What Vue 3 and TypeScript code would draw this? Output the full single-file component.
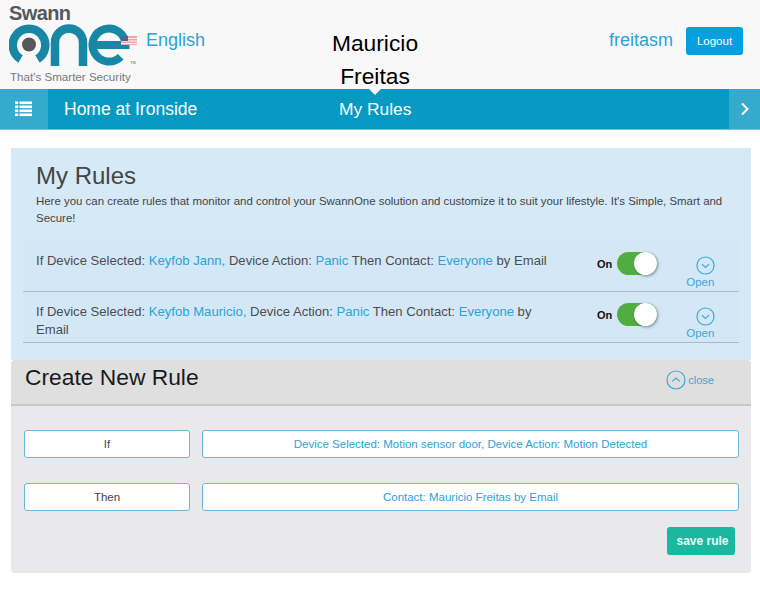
<script setup lang="ts">
interface Rule {
  device: string;
  contact: string;
}

const rules: Rule[] = [
  { device: 'Keyfob Jann,', contact: 'Everyone' },
  { device: 'Keyfob Mauricio,', contact: 'Everyone' }
];
</script>

<template>
  <div class="page">
    <header class="top-bar">
      <div class="brand">
        <div class="logo">
          <span class="logo-name">Swann</span>
          <svg class="logo-mark" width="136" height="46" viewBox="0 0 136 46">
            <g fill="none" stroke="#1787a5" stroke-width="8.5">
              <path d="M11.5 36 A16.3 16.3 0 1 1 28.5 36" />
              <path d="M46 43 V19.5 A14 14 0 0 1 74 19.5 V43" />
            </g>
            <path d="M111.7 33.7 A16.5 16.5 0 1 1 116.5 22 H84" fill="none" stroke="#1787a5" stroke-width="8" />
            <circle cx="20" cy="21.5" r="7" fill="#55585b" />
            <rect x="112" y="13" width="16" height="9" fill="#e7a9a6" />
            <path d="M112 15.5 H128 M112 18 H128 M112 20.5 H128" stroke="#f4f0f0" stroke-width="1" />
            <rect x="112" y="13" width="7" height="5" fill="#53648f" />
            <text x="121" y="41" font-size="4" fill="#666">TM</text>
          </svg>
          <span class="logo-tag">That's Smarter Security</span>
        </div>
        <span class="lang">English</span>
      </div>
      <h1 class="user-name">Mauricio Freitas</h1>
      <div class="account">
        <span class="username">freitasm</span>
        <button class="logout">Logout</button>
      </div>
    </header>

    <nav class="nav-bar">
      <div class="nav-btn menu">
        <svg width="17" height="16" viewBox="0 0 17 16" fill="#fff">
          <rect x="0" y="0.5" width="3.2" height="2.6" />
          <rect x="4.5" y="0.5" width="12.5" height="2.6" />
          <rect x="0" y="4.5" width="3.2" height="2.6" />
          <rect x="4.5" y="4.5" width="12.5" height="2.6" />
          <rect x="0" y="8.5" width="3.2" height="2.6" />
          <rect x="4.5" y="8.5" width="12.5" height="2.6" />
          <rect x="0" y="12.5" width="3.2" height="2.6" />
          <rect x="4.5" y="12.5" width="12.5" height="2.6" />
        </svg>
      </div>
      <span class="home">Home at Ironside</span>
      <span class="nav-title">My Rules</span>
      <div class="nav-btn next">
        <svg width="10" height="14" viewBox="0 0 10 14" fill="none" stroke="#fff" stroke-width="2">
          <path d="M2 1.5 L7.5 7 L2 12.5" />
        </svg>
      </div>
    </nav>

    <main class="content">
      <section class="rules-panel">
        <div class="intro">
          <h2>My Rules</h2>
          <p>Here you can create rules that monitor and control your SwannOne solution and customize it to suit your lifestyle. It's Simple, Smart and Secure!</p>
        </div>
        <div v-for="rule in rules" :key="rule.device" class="rule-row">
          <p class="rule-text">
            If Device Selected: <em>{{ rule.device }}</em> Device Action: <em>Panic</em> Then Contact: <em>{{ rule.contact }}</em> by Email
          </p>
          <div class="rule-state">
            <b>On</b>
            <span class="toggle"><span class="knob"></span></span>
          </div>
          <div class="rule-open">
            <svg width="19" height="19" viewBox="0 0 20 20" fill="none" stroke="#3ba6d6" stroke-width="1.2">
              <circle cx="10" cy="10" r="9" />
              <path d="M6.2 8.6 L10 12 L13.8 8.6" />
            </svg>
            <span>Open</span>
          </div>
        </div>
      </section>

      <section class="create-panel">
        <div class="create-head">
          <h2>Create New Rule</h2>
          <div class="close-link">
            <svg width="20" height="20" viewBox="0 0 20 20" fill="none" stroke="#3ba6d6" stroke-width="1.2">
              <circle cx="10" cy="10" r="9" />
              <path d="M6.2 11.4 L10 8 L13.8 11.4" />
            </svg>
            <span>close</span>
          </div>
        </div>
        <div class="create-body">
          <div class="field-row">
            <div class="field label">If</div>
            <div class="field value">Device Selected: Motion sensor door, Device Action: Motion Detected</div>
          </div>
          <div class="field-row">
            <div class="field label">Then</div>
            <div class="field value">Contact: Mauricio Freitas by Email</div>
          </div>
          <div class="actions">
            <button class="save">save rule</button>
          </div>
        </div>
      </section>
    </main>
  </div>
</template>

<style>
html,
body {
  background: #fff;
}
</style>

<style scoped>
.page {
  width: 760px;
  height: 590px;
  overflow: hidden;
  font-family: "Liberation Sans", Arial, sans-serif;
  color: #444;
}

.top-bar {
  height: 89px;
  background: #f8f8f9;
  display: grid;
  grid-template-columns: 310px 130px 1fr;
  box-sizing: border-box;
}

.brand {
  display: flex;
  align-items: flex-start;
  padding-left: 9px;
}

.logo {
  display: flex;
  flex-direction: column;
  width: 136px;
}

.logo-name {
  font-size: 20px;
  font-weight: 700;
  letter-spacing: -0.6px;
  color: #55585b;
  line-height: 20px;
  margin-top: 3px;
}

.logo-mark {
  display: block;
}

.logo-tag {
  font-size: 11.6px;
  line-height: 14px;
  color: #77797b;
  margin-top: 1px;
  margin-left: 1px;
  white-space: nowrap;
}

.lang {
  font-size: 18px;
  line-height: 22px;
  color: #2ba3d5;
  margin-top: 29px;
  margin-left: 1px;
}

.user-name {
  margin: 0;
  padding-top: 27px;
  font-size: 22.8px;
  font-weight: 400;
  line-height: 33px;
  color: #000;
  text-align: center;
}

.account {
  display: flex;
  justify-content: flex-end;
  align-items: flex-start;
  gap: 13px;
  padding: 27px 17px 0 0;
}

.username {
  font-size: 18px;
  line-height: 27px;
  color: #2ba3d5;
}

.logout {
  width: 57px;
  height: 28px;
  padding: 0;
  border: none;
  border-radius: 3px;
  background: #069fdf;
  color: #fff;
  font-family: inherit;
  font-size: 11.5px;
}

.nav-bar {
  position: relative;
  height: 41px;
  box-sizing: border-box;
  background: #069ac3;
  border-bottom: 1px solid #7fc4dc;
  display: flex;
  align-items: center;
  color: #fff;
}

.nav-bar::before {
  content: "";
  position: absolute;
  left: 369px;
  top: 0;
  border-left: 6px solid transparent;
  border-right: 6px solid transparent;
  border-top: 6px solid #f8f8f9;
}

.nav-btn {
  height: 40px;
  background: #36a9cf;
  display: flex;
  align-items: center;
  justify-content: center;
  flex: none;
}

.menu {
  width: 46px;
  padding-right: 2px;
  margin-right: 16px;
}

.next {
  width: 31px;
  margin-left: auto;
}

.home {
  font-size: 17.5px;
  width: 275px;
}

.nav-title {
  font-size: 17.4px;
}

.content {
  margin: 18px 9px 0 11px;
}

.rules-panel {
  background: #d6e9f6;
  padding: 16px 12px 17px;
}

.intro {
  padding: 0 13px 14px;
}

.intro h2 {
  margin: 0;
  font-size: 24px;
  font-weight: 400;
  line-height: 24px;
  color: #444;
}

.intro p {
  margin: 5px 0 0;
  font-size: 11.45px;
  line-height: 17px;
  color: #444;
}

.rule-row {
  height: 51px;
  box-sizing: border-box;
  background: #d3e7f7;
  border-bottom: 1px solid #a7bccb;
  display: flex;
  align-items: flex-start;
  padding: 11px 0 0 13px;
}

.rule-text {
  margin: 0;
  width: 520px;
  flex: none;
  font-size: 13.1px;
  line-height: 18px;
  color: #4d4d4d;
}

.rule-text em {
  font-style: normal;
  color: #2ba3d5;
}

.rule-state {
  margin-left: 41px;
  display: flex;
  align-items: center;
  gap: 5px;
  flex: none;
}

.rule-state b {
  font-size: 11px;
  color: #111;
}

.toggle {
  position: relative;
  display: block;
  width: 40px;
  height: 23px;
  border-radius: 12px;
  background: #50ae40;
}

.knob {
  position: absolute;
  right: 0;
  top: 0;
  width: 23px;
  height: 23px;
  border-radius: 50%;
  background: #fff;
  box-shadow: 1px 1px 3px rgba(0, 0, 0, 0.4);
}

.rule-open {
  margin-left: 26px;
  width: 34px;
  margin-top: 4px;
  display: flex;
  flex-direction: column;
  align-items: center;
  font-size: 11.5px;
  line-height: 14px;
  color: #3ba6d6;
}

.rule-open svg {
  margin-left: 11px;
}

.create-panel {
  height: 213px;
  border-radius: 4px;
  background: #e9e9eb;
  overflow: hidden;
}

.create-head {
  height: 46px;
  box-sizing: border-box;
  background: #dfdfe0;
  border-bottom: 2px solid #c9c9c9;
  display: flex;
  align-items: center;
  justify-content: space-between;
  padding: 0 37px 0 14px;
}

.create-head h2 {
  margin: 0 0 9px;
  font-size: 22.8px;
  font-weight: 400;
  color: #1a1a1a;
}

.close-link {
  display: flex;
  align-items: center;
  gap: 2px;
  margin-bottom: 4px;
  font-size: 11px;
  color: #3ba6d6;
}

.create-body {
  padding: 24px 12px 0 13px;
}

.field-row {
  display: flex;
  gap: 12px;
  margin-bottom: 25px;
}

.field {
  height: 28px;
  box-sizing: border-box;
  background: #fff;
  border: 1px solid #6fb6d8;
  border-radius: 3px;
  display: flex;
  align-items: center;
  justify-content: center;
  font-size: 11.5px;
}

.label {
  width: 166px;
  color: #444;
}

.value {
  flex: 1;
  color: #2ba3d5;
}

.actions {
  display: flex;
  justify-content: flex-end;
  margin-top: -9px;
  padding-right: 4px;
}

.save {
  width: 68px;
  height: 28px;
  padding: 0 0 0 3px;
  border: none;
  border-radius: 3px;
  background: #1bb8a0;
  color: #eafaf7;
  font-family: inherit;
  font-size: 12px;
  font-weight: 700;
}
</style>
